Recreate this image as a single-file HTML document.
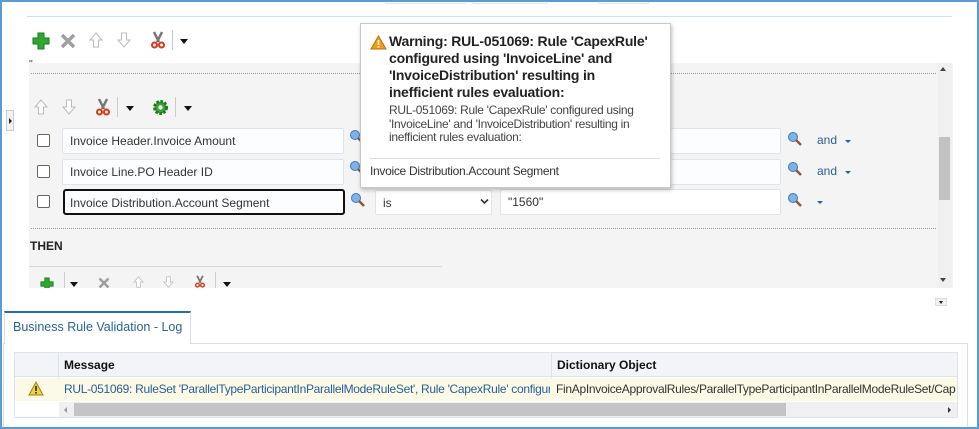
<!DOCTYPE html>
<html><head><style>
*{box-sizing:border-box;margin:0;padding:0}
body{width:979px;height:429px;position:relative;overflow:hidden;background:#fff;font-family:"Liberation Sans",sans-serif;font-size:12px;color:#333}
.a{position:absolute}
.inp{position:absolute;background:#fcfdfe;border:1px solid #dfe4ea;border-radius:2px;font-size:12px;color:#333;padding-left:7px;line-height:24px}
.cb{position:absolute;width:13px;height:13px;border:1px solid #666;border-radius:2px;background:#fff}
.dd{position:absolute;width:0;height:0;border-left:4px solid transparent;border-right:4px solid transparent;border-top:5px solid #111}
.sep{position:absolute;width:1px;height:20px;background:#c8ccd0}
.dots{position:absolute;height:0;border-top:1px dotted #999}
.mag{position:absolute;width:16px;height:16px}
.lnk{position:absolute;color:#2a5d9a;font-size:12px}
</style></head><body>
<div class="a" style="left:0;top:0;width:979px;height:429px;border:2px solid #5b9bd5;z-index:20;pointer-events:none"></div>
<div class="a" style="left:385px;top:-2px;width:82px;height:6px;border:1px solid #e2e6ea;border-radius:2px"></div>
<div class="a" style="left:472px;top:-2px;width:76px;height:6px;border:1px solid #e2e6ea;border-radius:2px"></div>
<div class="a" style="left:598px;top:-2px;width:51px;height:6px;border:1px solid #e2e6ea;border-radius:2px"></div>
<div class="a" style="left:27px;top:16px;width:925px;height:1px;background:#cfe0ee"></div>

<!-- toolbar 1 -->
<svg class="a" style="left:32px;top:32px" width="18" height="18" viewBox="0 0 18 18"><path d="M6 1h6v5h5v6h-5v5H6v-5H1V6h5z" fill="#2ea82e" stroke="#1d7a1d"/></svg>
<svg class="a" style="left:60px;top:33px" width="16" height="16" viewBox="0 0 16 16"><path d="M2 2L14 14M14 2L2 14" stroke="#a0a0a0" stroke-width="3.5"/></svg>
<svg class="a" style="left:89px;top:32px" width="14" height="16" viewBox="0 0 14 16"><path d="M7 1L13 8H9.5V15H4.5V8H1z" fill="#fff" stroke="#bbb"/></svg>
<svg class="a" style="left:117px;top:32px" width="14" height="16" viewBox="0 0 14 16"><path d="M7 15L13 8H9.5V1H4.5V8H1z" fill="#fff" stroke="#bbb"/></svg>
<svg class="a" style="left:150px;top:31px" width="16" height="18" viewBox="0 0 16 18"><path d="M4 1L9 11M12 1L7 11" stroke="#777" stroke-width="2.5"/><circle cx="4.5" cy="14" r="2.5" fill="none" stroke="#d63a1a" stroke-width="2"/><circle cx="11.5" cy="14" r="2.5" fill="none" stroke="#d63a1a" stroke-width="2"/></svg>
<div class="sep" style="left:172px;top:30px"></div>
<div class="dd" style="left:180px;top:39px"></div>

<!-- gray panel -->
<div class="a" style="left:29px;top:63px;width:924px;height:225px;background:#f4f4f4"></div>
<div class="a" style="left:29px;top:59px;font-size:10px;color:#333">''</div>
<div class="dots" style="left:31px;top:73px;width:905px"></div>
<div class="a" style="left:938px;top:63px;width:14px;height:225px;background:#f0f0f0"></div>
<div class="a" style="left:939px;top:137px;width:11px;height:63px;background:#c2c2c2"></div>
<div class="a" style="left:940px;top:67px;width:0;height:0;border-left:3px solid transparent;border-right:3px solid transparent;border-bottom:4px solid #444"></div>
<div class="a" style="left:940px;top:278px;width:0;height:0;border-left:3px solid transparent;border-right:3px solid transparent;border-top:4px solid #444"></div>
<div class="a" style="left:6px;top:110px;width:8px;height:21px;background:#f2f2f2;border:1px solid #ccc"></div>
<div class="a" style="left:9px;top:118px;width:0;height:0;border-top:3px solid transparent;border-bottom:3px solid transparent;border-left:3px solid #222"></div>

<!-- toolbar 2 -->
<svg class="a" style="left:34px;top:99px" width="14" height="16" viewBox="0 0 14 16"><path d="M7 1L13 8H9.5V15H4.5V8H1z" fill="#fff" stroke="#bbb"/></svg>
<svg class="a" style="left:62px;top:99px" width="14" height="16" viewBox="0 0 14 16"><path d="M7 15L13 8H9.5V1H4.5V8H1z" fill="#fff" stroke="#bbb"/></svg>
<svg class="a" style="left:95px;top:98px" width="16" height="18" viewBox="0 0 16 18"><path d="M4 1L9 11M12 1L7 11" stroke="#777" stroke-width="2.5"/><circle cx="4.5" cy="14" r="2.5" fill="none" stroke="#d63a1a" stroke-width="2"/><circle cx="11.5" cy="14" r="2.5" fill="none" stroke="#d63a1a" stroke-width="2"/></svg>
<div class="sep" style="left:117px;top:97px"></div>
<div class="dd" style="left:126px;top:106px"></div>
<svg class="a" style="left:152px;top:99px" width="17" height="17" viewBox="0 0 17 17"><circle cx="8.5" cy="8.5" r="6" fill="#3aa33a" stroke="#1f7a1f" stroke-width="3" stroke-dasharray="2.5 1.5"/><circle cx="8.5" cy="8.5" r="2.2" fill="#f4f4f4"/></svg>
<div class="sep" style="left:175px;top:97px"></div>
<div class="dd" style="left:184px;top:106px"></div>

<!-- rows -->
<div class="cb" style="left:37px;top:134px"></div>
<div class="inp" style="left:62px;top:128px;width:282px;height:26px">Invoice Header.Invoice Amount</div>
<div class="cb" style="left:37px;top:165px"></div>
<div class="inp" style="left:62px;top:159px;width:282px;height:26px">Invoice Line.PO Header ID</div>
<div class="cb" style="left:37px;top:195px"></div>
<div class="inp" style="left:63px;top:189px;width:282px;height:26px;border:2px solid #111;border-radius:3px;padding-left:5px">Invoice Distribution.Account Segment</div>
<svg class="mag" style="left:349px;top:129px" viewBox="0 0 16 16"><circle cx="6" cy="6" r="4.5" fill="#7fb2e8" stroke="#3d78b8"/><path d="M9 9L14 14" stroke="#8a5a3a" stroke-width="2.5"/></svg>
<svg class="mag" style="left:349px;top:160px" viewBox="0 0 16 16"><circle cx="6" cy="6" r="4.5" fill="#7fb2e8" stroke="#3d78b8"/><path d="M9 9L14 14" stroke="#8a5a3a" stroke-width="2.5"/></svg>
<svg class="mag" style="left:350px;top:192px" viewBox="0 0 16 16"><circle cx="6" cy="6" r="4.5" fill="#7fb2e8" stroke="#3d78b8"/><path d="M9 9L14 14" stroke="#8a5a3a" stroke-width="2.5"/></svg>
<div class="inp" style="left:375px;top:190px;width:117px;height:25px;background:#fff">is</div>
<svg class="a" style="left:480px;top:198px" width="9" height="7" viewBox="0 0 9 7"><path d="M1 1.5L4.5 5L8 1.5" stroke="#333" stroke-width="1.6" fill="none"/></svg>
<div class="inp" style="left:671px;top:128px;width:110px;height:26px;border-left:none"></div>
<div class="inp" style="left:671px;top:159px;width:110px;height:26px;border-left:none"></div>
<div class="inp" style="left:500px;top:189px;width:281px;height:26px;background:#fff">"1560"</div>
<svg class="mag" style="left:787px;top:131px" viewBox="0 0 16 16"><circle cx="6" cy="6" r="4.5" fill="#7fb2e8" stroke="#3d78b8"/><path d="M9 9L14 14" stroke="#8a5a3a" stroke-width="2.5"/></svg>
<svg class="mag" style="left:787px;top:161px" viewBox="0 0 16 16"><circle cx="6" cy="6" r="4.5" fill="#7fb2e8" stroke="#3d78b8"/><path d="M9 9L14 14" stroke="#8a5a3a" stroke-width="2.5"/></svg>
<svg class="mag" style="left:787px;top:192px" viewBox="0 0 16 16"><circle cx="6" cy="6" r="4.5" fill="#7fb2e8" stroke="#3d78b8"/><path d="M9 9L14 14" stroke="#8a5a3a" stroke-width="2.5"/></svg>
<div class="lnk" style="left:817px;top:133px">and</div>
<div class="lnk" style="left:817px;top:164px">and</div>
<div class="a" style="left:845px;top:140px;border-left:3px solid transparent;border-right:3px solid transparent;border-top:3px solid #2a5d9a"></div>
<div class="a" style="left:845px;top:171px;border-left:3px solid transparent;border-right:3px solid transparent;border-top:3px solid #2a5d9a"></div>
<div class="a" style="left:817px;top:201px;border-left:3px solid transparent;border-right:3px solid transparent;border-top:3px solid #2a5d9a"></div>

<div class="dots" style="left:31px;top:228px;width:905px"></div>
<div class="a" style="left:30px;top:239px;font-size:12px;font-weight:bold;color:#222">THEN</div>
<div class="a" style="left:29px;top:266px;width:413px;height:1px;background:#d8d8d8"></div>

<!-- toolbar 3 -->
<svg class="a" style="left:39px;top:277px" width="16" height="14" viewBox="0 0 16 16"><path d="M5.5 1h5v4.5H15v5h-4.5V15h-5v-4.5H1v-5h4.5z" fill="#2ea82e" stroke="#1d7a1d"/></svg>
<div class="sep" style="left:64px;top:272px;height:16px"></div>
<div class="dd" style="left:70px;top:282px"></div>
<svg class="a" style="left:97px;top:277px" width="14" height="12" viewBox="0 0 16 16"><path d="M2 2L14 14M14 2L2 14" stroke="#a0a0a0" stroke-width="3.5"/></svg>
<svg class="a" style="left:132px;top:276px" width="13" height="12" viewBox="0 0 14 16"><path d="M7 1L13 8H9.5V15H4.5V8H1z" fill="#fff" stroke="#bbb"/></svg>
<svg class="a" style="left:162px;top:276px" width="13" height="12" viewBox="0 0 14 16"><path d="M7 15L13 8H9.5V1H4.5V8H1z" fill="#fff" stroke="#bbb"/></svg>
<svg class="a" style="left:192px;top:275px" width="16" height="13" viewBox="0 0 16 18"><path d="M4 1L9 11M12 1L7 11" stroke="#777" stroke-width="2.5"/><circle cx="4.5" cy="14" r="2.5" fill="none" stroke="#d63a1a" stroke-width="2"/><circle cx="11.5" cy="14" r="2.5" fill="none" stroke="#d63a1a" stroke-width="2"/></svg>
<div class="sep" style="left:215px;top:272px;height:16px"></div>
<div class="dd" style="left:223px;top:282px"></div>
<div class="a" style="left:29px;top:288px;width:924px;height:10px;background:#fff"></div>

<!-- small button -->
<div class="a" style="left:935px;top:298px;width:12px;height:8px;background:#f0f0f0;border:1px solid #ddd"></div>
<div class="a" style="left:939px;top:301px;border-left:2px solid transparent;border-right:2px solid transparent;border-top:3px solid #222"></div>

<!-- tab -->
<div class="a" style="left:3px;top:343px;width:965px;height:86px;border:1px solid #d6dfe8;border-bottom:none"></div>
<div class="a" style="left:4px;top:311px;width:187px;height:33px;background:#fff;border:1px solid #d6dfe8;border-top:2px solid #1f6fbf;border-bottom:none"></div>
<div class="a" style="left:13px;top:320px;font-size:12.5px;color:#2a6496">Business Rule Validation - Log</div>

<!-- table -->
<div class="a" style="left:14px;top:352px;width:944px;height:66px;border:1px solid #dde3ea;background:#fff"></div>
<div class="a" style="left:15px;top:353px;width:942px;height:24px;background:#f2f4f7;border-bottom:1px solid #dde3ea"></div>
<div class="a" style="left:58px;top:353px;width:1px;height:48px;background:#dde3ea"></div>
<div class="a" style="left:551px;top:353px;width:1px;height:48px;background:#dde3ea"></div>
<div class="a" style="left:64px;top:358px;font-weight:bold;color:#111">Message</div>
<div class="a" style="left:557px;top:358px;font-weight:bold;color:#111">Dictionary Object</div>
<div class="a" style="left:15px;top:378px;width:942px;height:23px;background:#fafae6"></div>
<svg class="a" style="left:28px;top:381px" width="16" height="15" viewBox="0 0 16 15"><path d="M8 1L15 14H1z" fill="#f4d13a" stroke="#9a8420"/><rect x="7.2" y="5" width="1.6" height="5" fill="#222"/><rect x="7.2" y="11" width="1.6" height="1.6" fill="#222"/></svg>
<div class="a" style="left:64px;top:382px;width:486px;overflow:hidden;white-space:nowrap;color:#2a5d9a;font-size:12px;letter-spacing:-0.3px">RUL-051069: RuleSet 'ParallelTypeParticipantInParallelModeRuleSet', Rule 'CapexRule' configured</div>
<div class="a" style="left:556px;top:382px;width:400px;overflow:hidden;white-space:nowrap;color:#333;font-size:12px;letter-spacing:-0.3px">FinApInvoiceApprovalRules/ParallelTypeParticipantInParallelModeRuleSet/CapexRule</div>
<div class="a" style="left:59px;top:402px;width:898px;height:15px;background:#f0f0f0"></div>
<div class="a" style="left:74px;top:403px;width:712px;height:13px;background:#c4c4c4"></div>
<div class="a" style="left:64px;top:407px;border-top:3px solid transparent;border-bottom:3px solid transparent;border-right:3px solid #999"></div>
<div class="a" style="left:948px;top:407px;border-top:3px solid transparent;border-bottom:3px solid transparent;border-left:3px solid #333"></div>

<!-- tooltip -->
<div class="a" style="left:360px;top:23px;width:311px;height:165px;background:#fff;border:1px solid #c8c8c8;box-shadow:1px 2px 4px rgba(0,0,0,.25);z-index:5">
 <svg class="a" style="left:9px;top:11px" width="17" height="15" viewBox="0 0 17 15"><path d="M8.5 1L16 14H1z" fill="#f29b16" stroke="#c06f00"/><rect x="7.7" y="5" width="1.6" height="5" fill="#fff"/><rect x="7.7" y="11" width="1.6" height="1.6" fill="#fff"/></svg>
 <div class="a" style="left:28px;top:9px;width:262px;font-size:14px;font-weight:bold;line-height:17px;color:#222;letter-spacing:-0.2px">Warning: RUL-051069: Rule 'CapexRule' configured using 'InvoiceLine' and 'InvoiceDistribution' resulting in inefficient rules evaluation:</div>
 <div class="a" style="left:28px;top:80px;width:262px;font-size:12px;line-height:13.5px;color:#444;letter-spacing:-0.3px">RUL-051069: Rule 'CapexRule' configured using 'InvoiceLine' and 'InvoiceDistribution' resulting in inefficient rules evaluation:</div>
 <div class="a" style="left:9px;top:134px;width:290px;height:1px;background:#ddd"></div>
 <div class="a" style="left:9px;top:140px;font-size:12px;color:#333;letter-spacing:-0.3px">Invoice Distribution.Account Segment</div>
</div>
</body></html>
